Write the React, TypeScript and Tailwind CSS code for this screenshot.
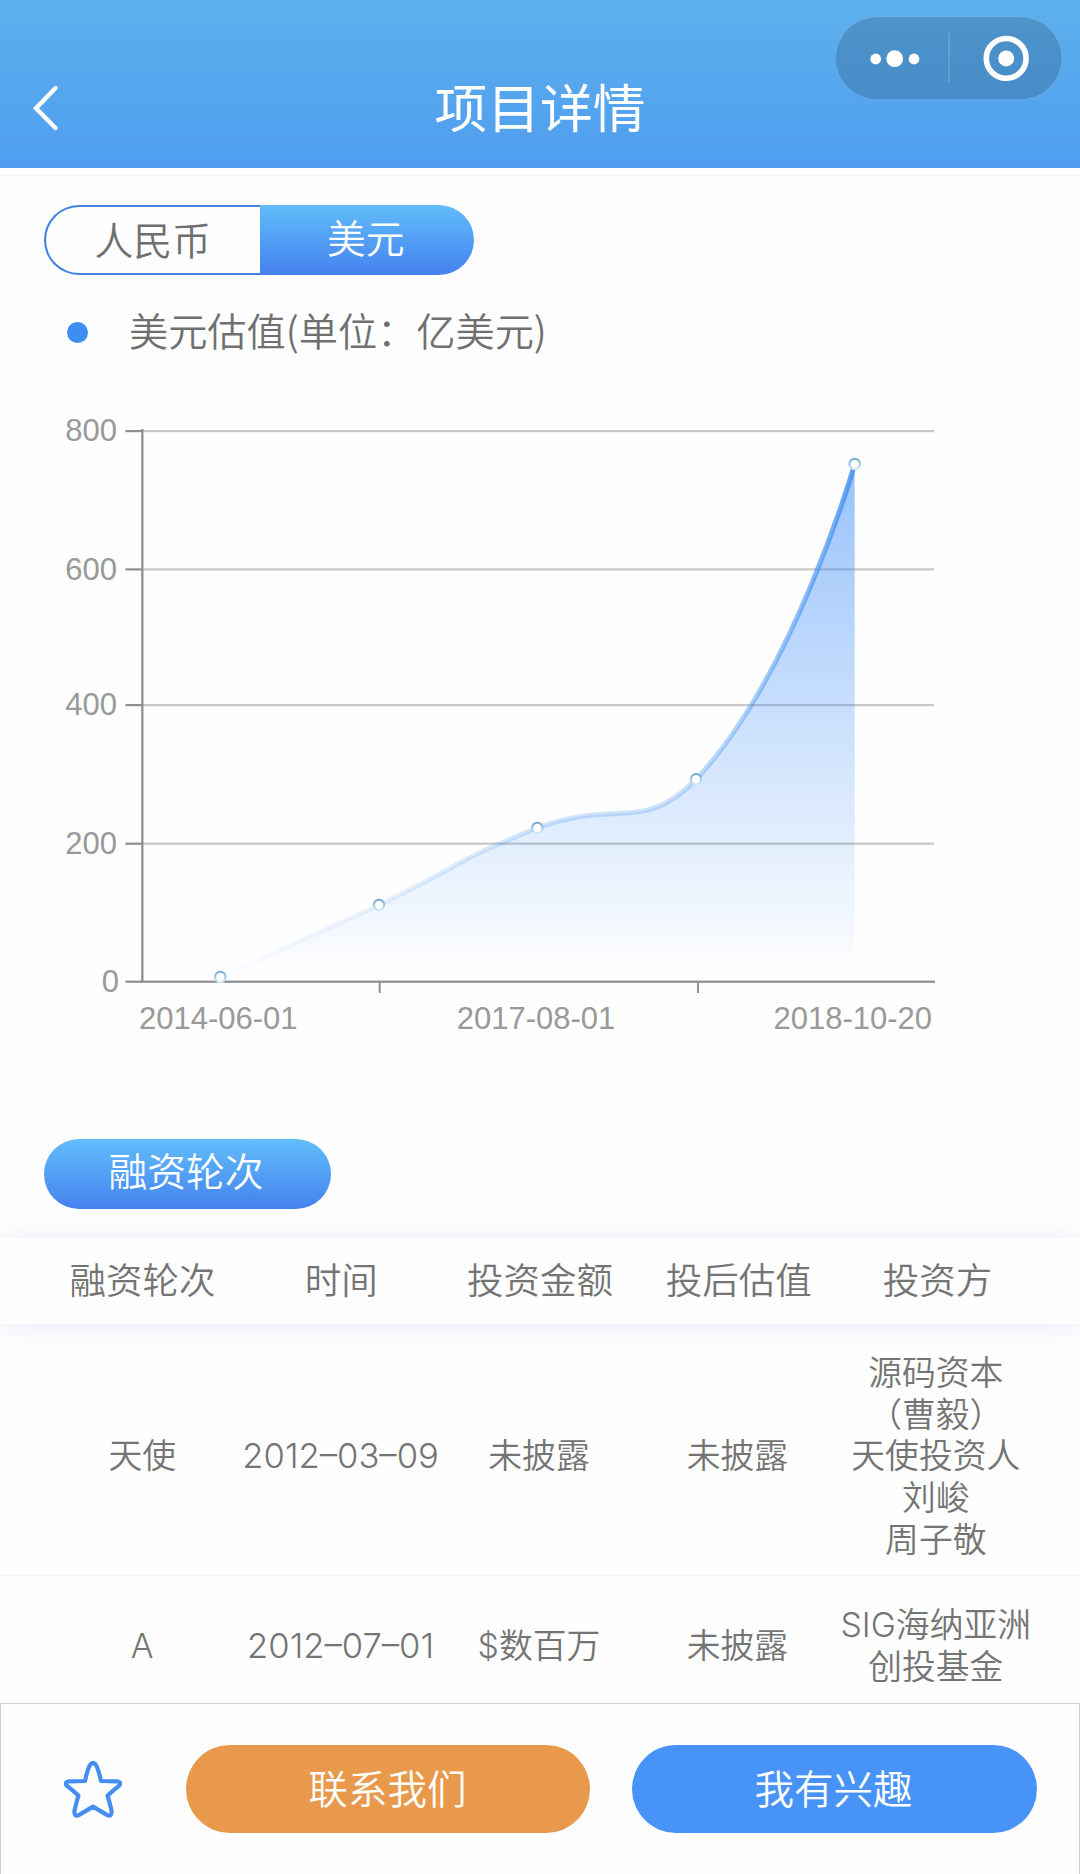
const POINTS = [
  { x: 220.3, y: 977 },
  { x: 379, y: 905 },
  { x: 537.3, y: 828 },
  { x: 696, y: 779.3 },
  { x: 854.7, y: 464 },
];

const CURVE =
  'M220.3 977 C220.3 977 300 941.5 379 905 C458.5 867 456 860 537.3 828 C614 798.5 645 834 696 779.3 C794 676 854.7 464 854.7 464';

const GRID = [
  { label: '800', y: 431 },
  { label: '600', y: 569.3 },
  { label: '400', y: 705 },
  { label: '200', y: 843.6 },
];

const ROWS = [
  {
    round: '天使',
    date: '2012–03–09',
    amount: '未披露',
    valuation: '未披露',
    investors: ['源码资本', '（曹毅）', '天使投资人', '刘峻', '周子敬'],
  },
  {
    round: 'A',
    date: '2012–07–01',
    amount: '$数百万',
    valuation: '未披露',
    investors: ['SIG海纳亚洲', '创投基金'],
  },
];

const HEADINGS = ['融资轮次', '时间', '投资金额', '投后估值', '投资方'];

function Header() {
  return (
    <header className="relative flex h-[168px] shrink-0 items-start justify-center bg-linear-to-b from-[#5db0ec] to-[#509df0]">
      <svg className="absolute left-[30px] top-[83px]" width="32" height="50" viewBox="0 0 32 50" fill="none">
        <path d="M25.5 5 L6 25.3 L25.5 45" stroke="#fff" strokeWidth="4.4" strokeLinecap="round" strokeLinejoin="miter" />
      </svg>
      <h1 className="mt-[75px] text-[52.8px] leading-[60px] text-white">项目详情</h1>
      <svg className="absolute left-[835px] top-[16px]" width="228" height="84" viewBox="0 0 228 84">
        <rect x="0.5" y="1" width="226.5" height="82.5" rx="41.2" fill="#000" fillOpacity="0.15" stroke="#fff" strokeOpacity="0.1" strokeWidth="1" />
        <circle cx="40.7" cy="43" r="5.4" fill="#fff" />
        <circle cx="59.7" cy="42.7" r="8.4" fill="#fff" />
        <circle cx="79" cy="43" r="5.4" fill="#fff" />
        <rect x="113.5" y="17" width="1.2" height="49" fill="#fff" fillOpacity="0.25" />
        <circle cx="171.2" cy="42.4" r="19.9" fill="none" stroke="#fff" strokeWidth="5.6" />
        <circle cx="171.2" cy="42.4" r="8" fill="#fff" />
      </svg>
    </header>
  );
}

function Chart() {
  return (
    <svg className="mt-[21px] block shrink-0" width="1080" height="680" viewBox="0 380 1080 680">
      <defs>
        <linearGradient id="area" gradientUnits="userSpaceOnUse" x1="0" y1="464" x2="0" y2="978">
          <stop offset="0" stopColor="#3a8cf5" stopOpacity="0.52" />
          <stop offset="1" stopColor="#3a8cff" stopOpacity="0" />
        </linearGradient>
        <linearGradient id="line" gradientUnits="userSpaceOnUse" x1="0" y1="464" x2="0" y2="978">
          <stop offset="0" stopColor="#3f8df0" stopOpacity="0.82" />
          <stop offset="1" stopColor="#4f9bf0" stopOpacity="0" />
        </linearGradient>
        <linearGradient id="ring" x1="0" y1="0" x2="0" y2="1">
          <stop offset="0" stopColor="#6fa9d0" />
          <stop offset="1" stopColor="#cfe8fb" />
        </linearGradient>
      </defs>
      <g fontFamily="'Liberation Sans', sans-serif" fontSize="31" fill="#999">
        {GRID.map((g) => (
          <g key={g.label}>
            <rect x="142" y={g.y - 1} width="792" height="2.2" fill="#c8c8c8" />
            <rect x="125.5" y={g.y - 1} width="17" height="2.2" fill="#8f8f8f" />
            <text x="117" y={g.y + 10.2} textAnchor="end">
              {g.label}
            </text>
          </g>
        ))}
        <text x="119" y="992" textAnchor="end">0</text>
        <text x="218.3" y="1028.5" textAnchor="middle">2014-06-01</text>
        <text x="536" y="1028.5" textAnchor="middle">2017-08-01</text>
        <text x="852.8" y="1028.5" textAnchor="middle">2018-10-20</text>
      </g>
      <g fill="#8f8f8f">
        <rect x="141.2" y="429" width="2.3" height="553.5" />
        <rect x="125.5" y="980.6" width="809.5" height="2.2" />
        <rect x="378.7" y="982" width="2" height="11" />
        <rect x="697" y="982" width="2" height="11" />
      </g>
      <path d={CURVE} fill="none" stroke="url(#line)" strokeWidth="5" />
      <path d={CURVE + ' L854.7 981 L220.3 981 Z'} fill="url(#area)" />
      {POINTS.map((p) => (
        <circle key={p.x} cx={p.x} cy={p.y} r="5.2" fill="#fff" stroke="url(#ring)" strokeWidth="2" />
      ))}
    </svg>
  );
}

function Table() {
  return (
    <section className="mt-[29px] text-[#747474]">
      <div className="relative grid h-[86px] grid-cols-5 items-center bg-[#fefefe] pb-[3px] pl-[43px] pr-[43px] text-center text-[36.5px] font-[350] shadow-[0_2px_24px_rgba(90,90,200,0.13)]">
        {HEADINGS.map((h) => (
          <div key={h} className="whitespace-nowrap">
            {h}
          </div>
        ))}
      </div>
      {ROWS.map((r) => (
        <div
          key={r.round}
          className="grid grid-cols-5 items-center border-b border-[#f3f3f3] pb-[14.5px] pl-[43px] pr-[45px] pt-[28px] text-center font-['Inter','Noto_Sans_CJK_SC',sans-serif] text-[33.8px] font-[350] leading-[41.7px] last:border-b-0"
        >
          <div>{r.round}</div>
          <div className="whitespace-nowrap text-[34.6px] font-[350]">{r.date}</div>
          <div>{r.amount}</div>
          <div>{r.valuation}</div>
          <div className="whitespace-nowrap">
            {r.investors.map((n) => (
              <div key={n}>{n}</div>
            ))}
          </div>
        </div>
      ))}
    </section>
  );
}

function BottomBar() {
  return (
    <footer className="fixed inset-x-0 bottom-0 flex h-[171px] items-start border border-b-0 border-[#cfcfcf] bg-[#fefefe] text-[39.5px] font-[350] text-white">
      <svg className="ml-[63px] mt-[57px] shrink-0" width="58" height="58" viewBox="0 0 58 58" fill="none">
        <path
          d="M25.4 5 Q29 -1.4 32.6 5 Q34.8 10 37 20 Q46 20 53 20.3 Q58.8 21.4 54.6 25.2 Q50 28.8 43.6 34.6 Q45.8 42 47.6 50 Q48 56.6 42.4 53.6 L29 45.6 L15.6 53.6 Q10 56.6 10.4 50 Q12.2 42 14.4 34.6 Q8 28.8 3.4 25.2 Q-0.8 21.4 5 20.3 Q12 20 21 20 Q23.2 10 25.4 5 Z"
          stroke="#438ef0"
          strokeWidth="4.2"
          strokeLinejoin="round"
        />
      </svg>
      <button className="ml-[64px] mt-[41px] h-[88px] w-[404px] rounded-full bg-[#e8994c] pb-[5px] pr-[1px]">联系我们</button>
      <button className="ml-[42px] mt-[41px] h-[88px] w-[405px] rounded-full bg-[#4893f8] pb-[5px] pr-[2px]">我有兴趣</button>
    </footer>
  );
}

export default function App() {
  return (
    <div className="flex h-[1874px] flex-col overflow-hidden bg-[#fefefe] font-['Noto_Sans_CJK_SC',sans-serif]">
      <Header />
      <div className="h-[8px] shrink-0 border-b border-[#eef3f3]" />
      <div className="ml-[43.5px] mt-[29px] flex h-[70px] w-[430px] shrink-0 text-[38.8px] font-[350] leading-[60px]">
        <button className="w-[216.5px] rounded-l-full border-[2.5px] border-r-0 border-[#3f82e0] px-[33px] pb-[5px] text-[#6f6f6f]">人民币</button>
        <button className="flex-1 rounded-r-full bg-linear-to-b from-[#62bdfa] to-[#4681ef] pb-[8px] pr-[2px] text-white">美元</button>
      </div>
      <div className="mt-[28px] flex h-[56px] shrink-0 items-center text-[39.2px] font-[350] text-[#707070]">
        <span className="ml-[67px] mr-[41px] mt-[2px] size-[21px] rounded-full bg-[#3d8df2]" />
        <span className="pb-[3px]">美元估值(单位：亿美元)</span>
      </div>
      <Chart />
      <div className="ml-[43.5px] mt-[79px] flex h-[70px] w-[287px] shrink-0 items-center justify-center rounded-full bg-linear-to-b from-[#62bdfa] to-[#4681ef] pb-[9px] pr-[2px] text-[38.8px] font-[350] text-white">
        融资轮次
      </div>
      <Table />
      <BottomBar />
    </div>
  );
}
